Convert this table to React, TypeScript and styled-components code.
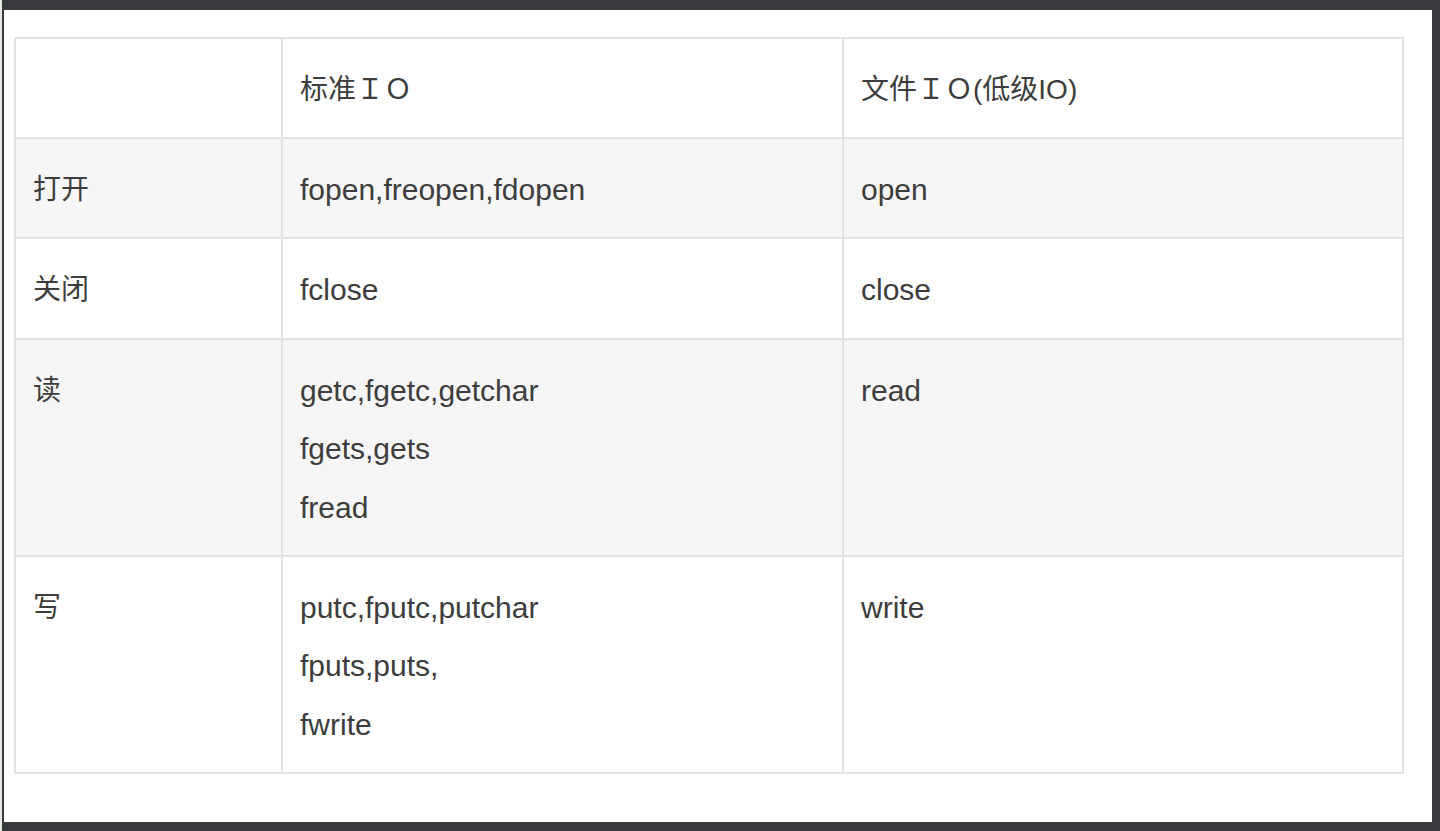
import React from "react";
import styled, { createGlobalStyle } from "styled-components";

const GlobalStyle = createGlobalStyle`
  html, body {
    margin: 0;
    padding: 0;
    background: #3a3b3f;
  }
`;

interface IRow {
  label: string;
  std: string[];
  file: string[];
}

const rows: IRow[] = [
  { label: "打开", std: ["fopen,freopen,fdopen"], file: ["open"] },
  { label: "关闭", std: ["fclose"], file: ["close"] },
  { label: "读", std: ["getc,fgetc,getchar", "fgets,gets", "fread"], file: ["read"] },
  { label: "写", std: ["putc,fputc,putchar", "fputs,puts,", "fwrite"], file: ["write"] },
];

const App = () => {
  return (
    <Frame>
      <GlobalStyle />
      <Panel>
        <Table>
          <colgroup>
            <col style={{ width: 267 }} />
            <col style={{ width: 561 }} />
            <col style={{ width: 560 }} />
          </colgroup>
          <thead>
            <Row>
              <Cell></Cell>
              <Cell>标准ＩＯ</Cell>
              <Cell>文件ＩＯ(低级IO)</Cell>
            </Row>
          </thead>
          <tbody>
            {rows.map((r, i) => (
              <Row key={r.label} striped={i % 2 === 0}>
                <Cell>{r.label}</Cell>
                <Cell>
                  {r.std.map((line) => (
                    <Line key={line}>{line}</Line>
                  ))}
                </Cell>
                <Cell>
                  {r.file.map((line) => (
                    <Line key={line}>{line}</Line>
                  ))}
                </Cell>
              </Row>
            ))}
          </tbody>
        </Table>
      </Panel>
    </Frame>
  );
};

export default App;

const Frame = styled.div`
  box-sizing: border-box;
  width: 1440px;
  height: 831px;
  padding: 10px 8px 9px 2px;
  border-left: 2px solid #e2eae1;
  background: #3a3b3f;
  display: flex;
`;

const Panel = styled.div`
  flex: 1;
  background: #ffffff;
  padding: 27px 0 0 10px;
`;

const Table = styled.table`
  border-collapse: collapse;
  table-layout: fixed;
  width: 1388px;
  border: 2px solid #e2e2e2;
  font-family: "Liberation Sans", "Noto Sans CJK SC", sans-serif;
  font-size: 28px;
  color: #3d3d3d;
`;

const Row = styled.tr<{ striped?: boolean }>`
  background: ${({ striped }) => (striped ? "#f6f6f6" : "#ffffff")};
`;

const Cell = styled.td`
  border: 2px solid #e2e2e2;
  padding: 22px 16px 18px 17px;
  vertical-align: top;
  height: 58px;
  line-height: 58px;
  white-space: nowrap;
`;

const Line = styled.div`
  height: 58.4px;
  font-size: 30px;
`;
